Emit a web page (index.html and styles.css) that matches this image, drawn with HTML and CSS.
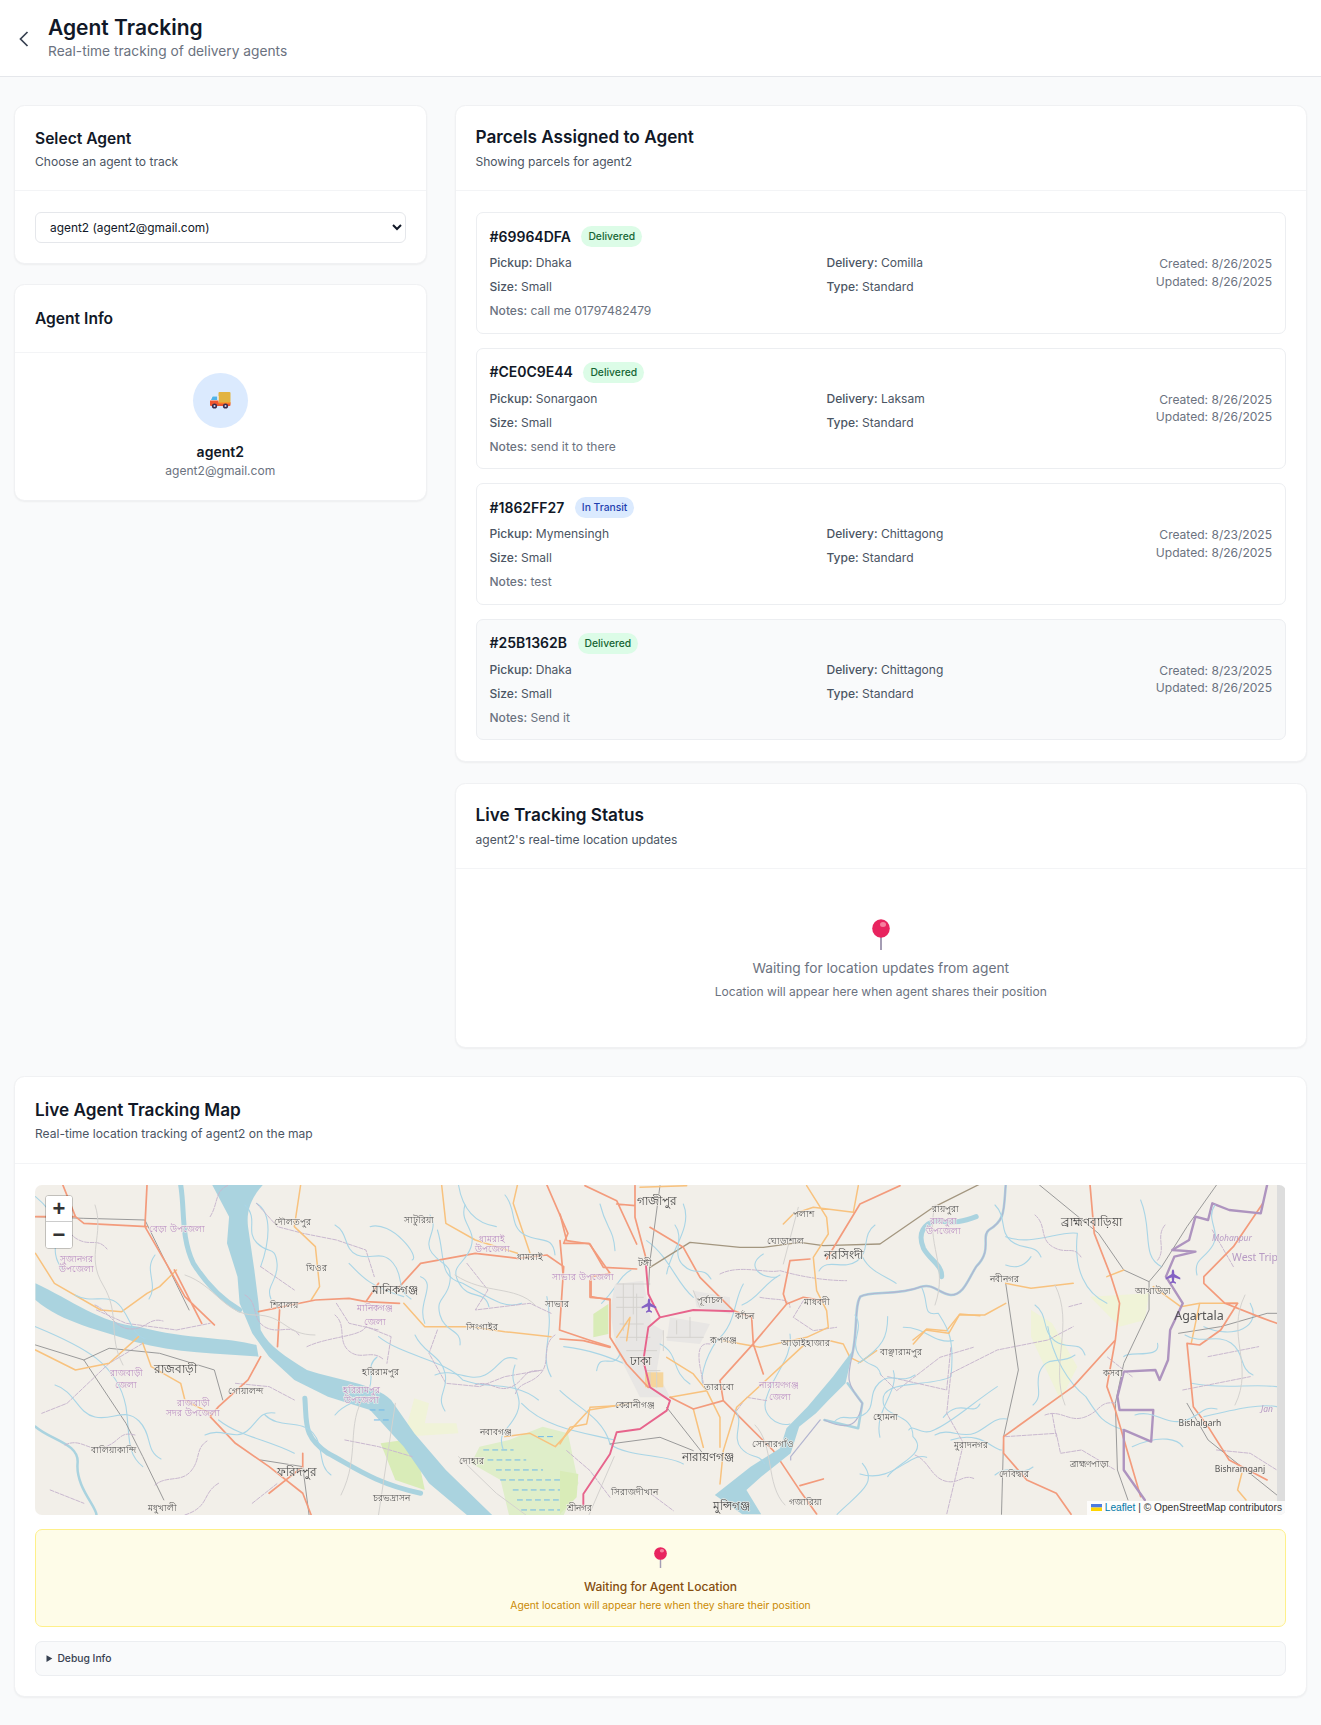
FILE: index.html
```html
<!DOCTYPE html>
<html>
  <head>
    <meta charset="UTF-8">
    <title>Agent Tracking</title>
    <link rel="stylesheet" href="styles.css">
  </head>
  <body>

    <header class="page-header">
      <svg class="back" width="10" height="16" viewBox="0 0 10 16"><path d="M8.5 1 1.5 8l7 7"/></svg>
      <div>
        <h1>Agent Tracking</h1>
        <p>Real-time tracking of delivery agents</p>
      </div>
    </header>

    <main class="page">
      <div class="top-grid">
        <div class="col side">
          <section class="card">
            <div class="card-head">
              <h2>Select Agent</h2>
              <p>Choose an agent to track</p>
            </div>
            <div class="card-body select-body">
              <select class="agent-select">
                <option>agent2 (agent2@gmail.com)</option>
              </select>
            </div>
          </section>

          <section class="card">
            <div class="card-head info-head">
              <h2>Agent Info</h2>
            </div>
            <div class="card-body agent-info">
              <div class="avatar">
                <svg width="21" height="17" viewBox="0 0 21 17">
                  <rect x="8.5" y="0" width="12" height="10.5" rx="1" fill="#e2b341"/>
                  <path d="M2 4h6.5v7H0V7.5z" fill="#f0f0f4"/>
                  <path d="M2.6 4.6h4.6v3.4H1z" fill="#4fb3ea"/>
                  <path d="M0 8.5h8.5v2H20.500v2.500a1 1 0 0 1-1 1H1a1 1 0 0 1-1-1z" fill="#f0562e"/>
                  <rect x="8.500" y="10" width="12" height="1.500" fill="#f79a2b"/>
                  <circle cx="4.500" cy="14" r="2.600" fill="#3a2e4f"/>
                  <circle cx="4.500" cy="14" r="1" fill="#d9d4e4"/>
                  <circle cx="15.500" cy="14" r="2.600" fill="#3a2e4f"/>
                  <circle cx="15.500" cy="14" r="1" fill="#d9d4e4"/>
                </svg>
              </div>
              <div class="agent-name">agent2</div>
              <div class="agent-email">agent2@gmail.com</div>
            </div>
          </section>
        </div>

        <div class="col main-col">
          <section class="card">
            <div class="card-head">
              <h2>Parcels Assigned to Agent</h2>
              <p>Showing parcels for agent2</p>
            </div>
            <div class="card-body parcels">

              <div class="parcel">
                <div class="parcel-main">
                  <div class="parcel-title"><span class="parcel-id">#69964DFA</span><span class="badge delivered">Delivered</span></div>
                  <div class="parcel-grid">
                    <div><b>Pickup:</b> Dhaka</div>
                    <div><b>Delivery:</b> Comilla</div>
                    <div><b>Size:</b> Small</div>
                    <div><b>Type:</b> Standard</div>
                  </div>
                  <div class="parcel-notes"><b>Notes:</b> call me 01797482479</div>
                </div>
                <div class="parcel-dates">Created: 8/26/2025<br>Updated: 8/26/2025</div>
              </div>

              <div class="parcel">
                <div class="parcel-main">
                  <div class="parcel-title"><span class="parcel-id">#CE0C9E44</span><span class="badge delivered">Delivered</span></div>
                  <div class="parcel-grid">
                    <div><b>Pickup:</b> Sonargaon</div>
                    <div><b>Delivery:</b> Laksam</div>
                    <div><b>Size:</b> Small</div>
                    <div><b>Type:</b> Standard</div>
                  </div>
                  <div class="parcel-notes"><b>Notes:</b> send it to there</div>
                </div>
                <div class="parcel-dates">Created: 8/26/2025<br>Updated: 8/26/2025</div>
              </div>

              <div class="parcel">
                <div class="parcel-main">
                  <div class="parcel-title"><span class="parcel-id">#1862FF27</span><span class="badge transit">In Transit</span></div>
                  <div class="parcel-grid">
                    <div><b>Pickup:</b> Mymensingh</div>
                    <div><b>Delivery:</b> Chittagong</div>
                    <div><b>Size:</b> Small</div>
                    <div><b>Type:</b> Standard</div>
                  </div>
                  <div class="parcel-notes"><b>Notes:</b> test</div>
                </div>
                <div class="parcel-dates">Created: 8/23/2025<br>Updated: 8/26/2025</div>
              </div>

              <div class="parcel selected">
                <div class="parcel-main">
                  <div class="parcel-title"><span class="parcel-id">#25B1362B</span><span class="badge delivered">Delivered</span></div>
                  <div class="parcel-grid">
                    <div><b>Pickup:</b> Dhaka</div>
                    <div><b>Delivery:</b> Chittagong</div>
                    <div><b>Size:</b> Small</div>
                    <div><b>Type:</b> Standard</div>
                  </div>
                  <div class="parcel-notes"><b>Notes:</b> Send it</div>
                </div>
                <div class="parcel-dates">Created: 8/23/2025<br>Updated: 8/26/2025</div>
              </div>

            </div>
          </section>

          <section class="card">
            <div class="card-head">
              <h2>Live Tracking Status</h2>
              <p>agent2's real-time location updates</p>
            </div>
            <div class="card-body waiting">
              <svg width="18" height="31" viewBox="0 0 18 31">
                <rect x="8" y="15" width="2" height="16" fill="#a49db4"/>
                <ellipse cx="9" cy="9.500" rx="8.800" ry="9.300" fill="#e8245f"/>
                <ellipse cx="11" cy="5.500" rx="3" ry="2.500" fill="#f6809f"/>
              </svg>
              <div class="waiting-title">Waiting for location updates from agent</div>
              <div class="waiting-sub">Location will appear here when agent shares their position</div>
            </div>
          </section>
        </div>
      </div>

      <section class="card map-card">
        <div class="card-head">
          <h2>Live Agent Tracking Map</h2>
          <p>Real-time location tracking of agent2 on the map</p>
        </div>
        <div class="card-body">
          <div class="map">
            <svg class="map-art" width="1250" height="330" viewBox="0 0 1250 330">
              <rect width="1250" height="330" fill="#f2efe9"/>

              <!-- west part, coords are from a 2.376 x 3 crop -->
              <g transform="translate(-35.300 -115) scale(.4209 .3333)">
                <path class="green pale" d="M985 985 1020 1000 1010 1060 1085 1060 1090 1090 960 1100Z"/>
                <path class="green" d="M905 1120 960 1110 1000 1200 1010 1260 940 1230Z"/>
                <path class="green wetland" d="M1140 1130 1210 1110 1290 1070 1350 1090 1375 1240 1340 1335H1210L1190 1230 1120 1180Z"/>
                <path class="water" d="M505 345H625C600 380 585 420 590 470L605 600 615 700 620 780C640 830 680 860 730 900 800 930 890 940 930 990L985 1090 1060 1200 1170 1335H1110L1020 1240 960 1130 880 1020 780 980 700 930 640 860 600 790 570 700 565 620 540 520 545 440Z"/>
                <path class="water" d="M85 640 85 690C150 760 240 780 320 815 420 850 520 850 615 860L610 825C540 800 450 810 330 770 240 760 170 690 85 640Z"/>
                <path class="water-line wide" d="M430 345C440 420 430 500 460 580 490 640 530 690 570 720"/>
                <path class="water-line wide" d="M725 985C730 1060 720 1100 780 1150 840 1190 890 1240 1000 1270"/>
                <path class="water-line med" d="M85 1070C120 1110 190 1120 185 1180 180 1250 230 1310 230 1335"/>
                <path class="water-line" d="M85 380C180 480 100 520 150 600M610 400C650 430 640 520 620 590M830 580C860 620 880 650 960 680M1010 760C990 700 1040 640 1000 620M880 470C930 450 1000 560 980 570M1040 480C1060 560 1040 620 1100 640 1160 680 1200 720 1240 700M1300 680C1320 800 1280 850 1310 920M1340 830C1420 840 1480 880 1540 910M85 770C200 830 280 880 300 1010 310 1100 300 1150 340 1190M520 1050C570 1100 640 1110 700 1150M900 800C960 860 1060 870 1100 930 1160 960 1220 930 1280 990M1240 1000C1300 1080 1400 1090 1460 1110M1430 700C1470 650 1470 620 1500 600M1090 345C1100 420 1130 460 1180 470"/>
                <path class="boundary" d="M500 440C520 400 510 360 545 345M610 400 660 470 720 490 800 510 870 540 890 620M620 590 700 660M800 700 830 760 900 780M730 830C780 800 860 800 870 770L930 800 920 880M1040 780 1020 850 1060 940 1140 950 1200 920 1290 900M1110 580 1160 660 1130 720 1260 700 1310 730M230 720 300 760 420 780 500 760M340 820 260 880 160 1000 100 1030M560 940 640 950 700 990M820 1110 900 1130 980 1160M120 1260 200 1300M440 1335C500 1310 480 1270 520 1240M600 1300 660 1240"/>
                <path class="rail" d="M85 440 200 445 345 450 380 540 450 720M85 825 200 870 300 1060 340 1160 390 1290M200 870 260 835 380 850 510 900 530 990M620 1170 720 1190 735 1335"/>
                <path class="minor" d="M900 1335 940 1000M1090 1160 1180 1270 1250 1335M1400 1335 1460 1160"/>
                <path class="secondary" d="M715 345 700 470 750 530 760 650 740 690M85 550 130 640 240 720 290 725 350 670 380 650 420 600M960 700 1010 770 1120 770 1200 785 1310 800M1050 345 1060 460 1130 510 1230 550M1230 345 1220 400 1260 550M85 840 180 900 260 880 330 800M340 820 360 890 430 940 440 990 500 1030M1200 1100 1260 1090 1320 1130 1400 1020 1500 1000"/>
                <path class="primary" d="M350 345 345 470 400 590 440 680 510 765M415 600 480 760M85 440 180 440 200 460 350 470M150 345 180 440M615 725 750 690 830 685 870 695 950 700M870 695 900 640M950 650 1000 580 1130 550 1230 565 1300 555 1340 590 1330 780 1400 810 1450 830M665 720 660 830M620 860 590 930 520 1010 500 1040 560 1120 640 1190 720 1270 740 1335M720 1150 720 1190 640 1270M1300 345 1350 490 1340 520 1400 520 1450 610 1405 620 1405 680 1450 690"/>
                <g class="wet"><path d="M880 1020H920M890 1050H930M1150 1140H1220M1160 1170H1250M1180 1200H1290M1190 1230H1350M1220 1260H1370M1230 1290H1360M1240 1320H1340M1280 1100H1320"/></g>
              </g>

              <!-- middle part, 3x crop, Dhaka -->
              <g transform="translate(525 -1) scale(.3333)">
                <path class="city" d="M165 300 250 290 275 420 310 440 290 560 330 640 240 640 170 500 150 380ZM330 400 450 420 420 480 320 470ZM400 320 510 340 510 390 410 370Z"/>
                <path class="urban" d="M255 565h55v45h-55z"/>
                <path class="green" d="M100 390 145 360 145 450 100 460ZM0 860 55 870 50 940 0 990Z"/>
                <path class="water-line" d="M120 60C140 140 160 130 165 200M370 60C400 130 330 200 320 270M260 170C330 220 350 300 400 340M550 300C520 350 530 420 470 470 430 530 420 590 430 600M0 620C50 670 130 700 150 780 200 820 320 810 370 840M300 480C360 510 330 560 390 600M610 210C560 240 590 280 650 280M1030 430C1100 430 1120 480 1180 470M690 450C700 520 640 570 620 640 600 690 650 730 690 720M1000 560C1020 620 940 680 960 760M1150 700C1200 640 1240 700 1260 660M900 870C1000 900 1050 800 1100 820M180 510C160 560 120 500 110 560"/>
                <path class="boundary" d="M480 270C540 240 620 270 660 260 730 280 800 290 860 290M730 350 700 400 760 440 830 430M450 480C390 470 430 580 430 600M600 340C650 350 690 340 690 370M530 680 560 640 620 650M20 800 90 860 150 940M960 570 1010 620 1140 520 1240 490M260 920 340 980"/>
                <path class="minor" d="M170 300H270M190 300V440M220 300V390M170 340H250M170 370H250M310 440V500M350 410V450M390 400V460M320 460H430M400 320 420 370M715 70 670 240M180 420H250M180 460H270M200 500H290M230 330V470M260 560H300M270 565V610M290 565V610"/>
                <path class="rail" d="M300 5 270 230 265 320M320 670 430 810M150 780 300 760 400 800"/>
                <path class="rail brown" d="M270 250 390 175 540 190 610 190 720 175 790 185 960 180 1120 70 1260 0"/>
                <path class="secondary" d="M740 5 800 100 805 150 760 220 770 320 800 380 805 430 740 460 600 490 490 470M670 120 700 90 760 70 880 85 895 5M810 470 850 480 870 520 900 535 950 500M1060 480 1100 435 1160 440 1200 390 1260 395M730 485 530 670 490 800 480 900M400 675 430 790M330 640 440 620 480 700 480 790M170 460 210 400 200 470M90 670 170 665M90 670 80 720 30 730 0 780M320 520 400 570 440 620M240 10 380 5"/>
                <path class="primary" d="M75 5 170 50 230 180M225 5V100L260 230M170 60 225 65M0 90 20 170 90 180 130 250 230 255M0 170 10 280M90 290V340L150 345V460L200 540 265 610M0 465 70 470 150 490M270 130 370 190 420 280 520 380 575 400 580 480 610 570M575 485 680 360 730 340 790 350M575 485 480 590 490 650 570 730 640 800 720 920 770 990M330 640 400 675 490 650M690 230 670 330 680 360M690 230 750 225M800 225 900 60 1020 5M720 905 790 885"/>
                <path class="trunk" d="M258 245 265 330 300 400 265 430 250 530 270 610 330 650 320 680 240 735 170 745 150 810 70 930V970M300 400 400 378 520 382"/>
              </g>

              <!-- east part, coords are from a 2.372 x 3 crop -->
              <g transform="translate(625 -15) scale(.4216 .3333)">
                <path class="green pale" d="M880 420 930 460 990 590 950 690 920 610 880 500ZM1020 380 1160 370 1150 450 1090 470Z"/>
                <path class="water-line wide" d="M660 150C625 160 610 190 625 235 640 270 670 285 668 320"/>
                <path class="water-line med" d="M820 45C815 120 820 150 780 180 760 200 790 240 750 290 730 330 720 375 690 375 660 370 650 340 620 350 560 380 500 360 475 380 460 410 470 480 455 560"/>
                <path class="water-line wide" d="M660 152C700 160 720 155 750 140"/>
                <path class="water" d="M458 540 440 640 400 690 370 730 330 770 310 850 240 920 205 960 240 1033H195L130 975 215 890 285 835 300 775 350 710 410 620Z"/>
                <path class="water-line med" d="M445 640 480 700 470 775 390 750"/>
                <path class="water-line" d="M560 340C540 320 500 310 480 260M620 350C640 400 620 440 660 430 680 470 700 500 690 620 650 650 540 630 530 680 520 750 600 720 600 800 640 850 560 880 540 920M540 440C540 500 530 530 470 580M820 200C880 230 950 180 990 190 980 300 1010 370 1060 400M1140 90C1170 180 1140 260 1190 290M820 285C850 300 870 280 880 260M920 470C930 560 970 640 1010 680 1040 740 1050 760 1100 780M800 650C740 700 690 760 650 780 620 800 600 760 590 780M690 810C760 780 790 840 810 840M1180 520C1190 570 1110 540 1100 560M1290 740C1360 720 1420 700 1463 710M1260 640C1340 660 1400 640 1463 650M1120 830C1190 790 1230 810 1240 830M1400 400C1430 470 1360 510 1290 470M480 880C520 940 470 970 420 1033"/>
                <path class="boundary" d="M690 610 800 540 920 510 980 470M540 620 680 660 690 530M970 410 1000 400M690 610 680 730 720 820 680 1033M820 800 940 790 950 850 1000 840 1080 900M1120 620 1060 560M930 730 940 800M1240 660 1400 620M1300 560 1420 530M1320 840 1400 850 1463 900M1310 180 1360 290"/>
                <path class="rail" d="M900 45 1040 190 1100 300 1160 335 1160 420 1100 580 1080 700 1085 900 1110 990M1320 45 1250 170 1190 290 1160 335M1250 700 1300 810 1463 975M820 340 850 600 815 800 810 1033M1230 490 1330 470 1440 430 1463 430"/>
                <path class="secondary" d="M820 340 880 355 980 340M820 400 770 435 710 435 685 490 630 480 600 510M1100 300 1060 320M1170 350 1235 410 1280 400 1370 400M1280 400 1260 520M1380 910 1370 960 1390 990"/>
                <path class="primary" d="M1020 45 1030 190 1070 320 1090 400 1080 510 1060 650 1080 720 1140 980M1080 510 980 650 815 800 815 850 870 930 940 970 975 1033M1430 100 1360 230 1290 320 1290 340 1340 400 1420 440 1463 460M1340 400 1370 400 1330 480 1280 525 1250 520 1265 710 1300 770 1350 870 1440 930"/>
                <path class="border-line" d="M1440 45 1425 130 1350 120 1310 100 1300 150 1270 140 1255 210 1215 240 1270 245 1220 260 1200 320 1240 400 1210 480 1205 570 1185 630 1175 600 1100 605 1085 680 1090 720 1170 720 1165 815 1100 780 1100 900 1150 990"/>
                <path class="river-border" d="M820 45C815 120 820 150 780 180 760 200 790 240 750 290 730 330 720 375 690 375 660 370 650 340 620 350 560 380 500 360 475 380 460 410 470 480 455 560 445 620 440 640 480 700 470 775 440 780 390 750M380 750 310 860 310 870"/>
              </g>

              <!-- small streams, tracks and district lines, plain map coords -->
              <path class="water-line" d="M395 30c10 15-8 25 2 38s20 10 18 28-15 16-10 34 22 14 20 30M430 20c-6 18 12 24 6 42s-22 18-12 36 26 6 30 24M470 10c12 14 4 32 20 40s28 0 30 20M300 40c14 8 8 24 22 30s24-6 36 8 2 26 18 36M210 20c14 14 0 26 12 38s18 2 20 20-12 22-6 36M40 110c18 10 34-4 46 12s10 26 24 32M120 70c-12 16 4 28-6 44M20 200c20 6 22 28 40 32s30-10 44 4 6 30 22 38M170 250c16-8 30 6 42-4s12-20 28-18M230 230c14 14 36 4 48 18s4 32 18 42M300 230c10-14 28-12 34-26s-4-22 8-32M400 190c18-8 34 8 50 0s16-22 32-16M380 150c8 18 26 20 30 38s-10 22 0 38M480 180c-8 20 10 30 2 48s-20 18-14 36M880 190c-14 10-24-4-36 8s-2 24-16 32-20-4-30 8M840 40c-14 10-4 26-18 36s-30-4-38 10M1000 120c14 10 6 26 20 36s24-2 30 14M1040 170c-14 10-26 0-34 14s4 26-8 36M1150 150c16 10 32-2 46 8s8 26 22 32M1100 230c18-6 30 10 48 6s18-16 34-12M1180 20c-10 14 6 26-2 40s-20 14-16 30M960 20c12 12 4 26 16 36s24 2 30 16M900 250c14-8 26 4 40-2s18-16 32-14M960 290c14-12 26 2 38-8M640 40c10 14-4 28 8 40s20 0 28 14M745 90c-16 8-22 24-38 30M820 130c10 14-6 26 4 40s18 6 22 20M700 225c10 12-4 26 6 38s16 4 24 16"/>
              <path class="boundary" d="M20 20c14 10 8 26 22 34s20-2 30 10M60 120c14 6 20 24 36 24s18-12 32-8M30 260c16-8 24 8 40 2s14-16 30-12M120 300c12-10 26-2 36-14s4-22 16-30M210 110c14 8 6 24 20 32s26-4 34 8M300 130c12 10 2 26 14 36s22-2 34 8M440 200c14-6 22 8 36 2s12-18 28-16M520 150c-14 10-4 26-14 38s-22 8-26 22M1000 30c12 10 4 24 18 32s20-2 28 10M1130 40c-10 12 2 24-8 36M1010 230c16-6 24 8 40 2s14-16 30-14M880 270c14 6 16 22 30 26s18-8 30-2"/>
              <path class="minor" d="M60 20c10 30-10 50 8 80s4 50 20 80M150 90c30 10 40 40 70 40s30 20 60 20M330 210c-20 30-4 60-24 100M420 90c30 20 60 10 80 30M1020 100c20 40-6 80 10 120M1210 110c-20 40 10 70-10 110M900 20c-10 40 14 60 0 100M720 240c20 20 10 60 30 80"/>

              <path class="plane" d="M614 113.500c1 0 1.300 2 1.300 4.500l6 3.800v1.700l-6-2-.3 3.400 2 1.500v1.300l-3-.9-3 .9v-1.300l2-1.500-.3-3.400-6 2v-1.700l6-3.800c0-2.500.3-4.500 1.300-4.500z"/>
              <path class="plane" d="M1138 84.500c1 0 1.300 2 1.300 4.500l6 3.800v1.700l-6-2-.3 3.400 2 1.500v1.300l-3-.9-3 .9v-1.300l2-1.500-.3-3.400-6 2v-1.700l6-3.800c0-2.500.3-4.500 1.300-4.500z"/>

              <g class="lbl big">
                <text x="622" y="20">গাজীপুর</text>
                <text x="605" y="180">ঢাকা</text>
                <text x="808" y="74">নরসিংদী</text>
                <text x="673" y="276">নারায়ণগঞ্জ</text>
                <text x="696" y="325">মুন্সিগঞ্জ</text>
                <text x="360" y="109">মানিকগঞ্জ</text>
                <text x="140" y="188">রাজবাড়ী</text>
                <text x="262" y="291">ফরিদপুর</text>
                <text x="1056" y="41">ব্রাহ্মণবাড়িয়া</text>
              </g>
              <g class="lbl">
                <text x="384" y="38">সাটুরিয়া</text>
                <text x="257" y="40">দৌলতপুর</text>
                <text x="281" y="86">ঘিওর</text>
                <text x="249" y="123">শিবালয়</text>
                <text x="447" y="145">সিংগাইর</text>
                <text x="345" y="190">হরিরামপুর</text>
                <text x="210" y="209">গোয়ালন্দ</text>
                <text x="78" y="268">বালিয়াকান্দি</text>
                <text x="127" y="326">মধুখালী</text>
                <text x="495" y="75">ধামরাই</text>
                <text x="522" y="122">সাভার</text>
                <text x="356" y="316">চরভদ্রাসন</text>
                <text x="436" y="279">দোহার</text>
                <text x="461" y="250">নবাবগঞ্জ</text>
                <text x="600" y="223">কেরানীগঞ্জ</text>
                <text x="768" y="32">পলাশ</text>
                <text x="750" y="59">ঘোড়াশাল</text>
                <text x="910" y="27">রায়পুরা</text>
                <text x="782" y="120">মাধবদী</text>
                <text x="709" y="134">কাঁচন</text>
                <text x="675" y="118">পূর্বাচল</text>
                <text x="688" y="158">রূপগঞ্জ</text>
                <text x="770" y="161">আড়াইহাজার</text>
                <text x="866" y="170">বাঞ্ছারামপুর</text>
                <text x="684" y="205">তারাবো</text>
                <text x="738" y="262">সোনারগাঁও</text>
                <text x="770" y="320">গজারিয়া</text>
                <text x="850" y="235">হোমনা</text>
                <text x="936" y="263">মুরাদনগর</text>
                <text x="599" y="310">সিরাজদীখান</text>
                <text x="544" y="326">শ্রীনগর</text>
                <text x="610" y="81">টঙ্গী</text>
                <text x="969" y="97">নবীনগর</text>
                <text x="1118" y="109">আখাউড়া</text>
                <text x="1078" y="191">কসবা</text>
                <text x="1054" y="282">ব্রাহ্মণপাড়া</text>
                <text x="979" y="292">দেবিদ্বার</text>
                <text x="1165" y="241">Bishalgarh</text>
                <text x="1205" y="287">Bishramganj</text>
              </g>
              <g class="lbl admin">
                <text x="340" y="126">মানিকগঞ্জ</text>
                <text x="340" y="140">জেলা</text>
                <text x="91" y="191">রাজবাড়ী</text>
                <text x="91" y="203">জেলা</text>
                <text x="326" y="208">হরিরামপুর</text>
                <text x="326" y="218">উপজেলা</text>
                <text x="158" y="221">রাজবাড়ী</text>
                <text x="158" y="231">সদর উপজেলা</text>
                <text x="457" y="57">ধামরাই</text>
                <text x="457" y="67">উপজেলা</text>
                <text x="548" y="95">সাভার উপজেলা</text>
                <text x="142" y="47">বেড়া উপজেলা</text>
                <text x="41" y="77">সুজানগর</text>
                <text x="41" y="87">উপজেলা</text>
                <text x="744" y="203">নারায়ণগঞ্জ</text>
                <text x="745" y="215">জেলা</text>
                <text x="908" y="39">রায়পুরা</text>
                <text x="908" y="49">উপজেলা</text>
              </g>
              <text class="lbl-city" x="1164" y="135">Agartala</text>
              <text class="lbl-state" x="1220" y="76">West Trip</text>
              <text class="lbl-town" x="1197" y="56">Mohanpur</text>
              <text class="lbl-town" x="1232" y="227">Jan</text>
              <rect x="1242" width="8" height="330" fill="#ddd"/>
            </svg>

            <div class="zoom-ctrl">
              <a class="zoom-in">+</a>
              <a class="zoom-out">−</a>
            </div>
            <div class="attribution">
              <svg width="11" height="7" viewBox="0 0 11 7"><rect width="11" height="3.500" fill="#4C7BE1"/><rect y="3.500" width="11" height="3.500" fill="#FFD500"/></svg>
              <a>Leaflet</a> | © OpenStreetMap contributors
            </div>
          </div>

          <div class="alert">
            <svg width="13" height="21" viewBox="0 0 18 31" preserveAspectRatio="none">
              <rect x="8" y="15" width="2" height="16" fill="#a49db4"/>
              <ellipse cx="9" cy="9.500" rx="8.800" ry="9.300" fill="#e8245f"/>
              <ellipse cx="11" cy="5.500" rx="3" ry="2.500" fill="#f6809f"/>
            </svg>
            <div class="alert-title">Waiting for Agent Location</div>
            <div class="alert-sub">Agent location will appear here when they share their position</div>
          </div>

          <details class="debug">
            <summary>Debug Info</summary>
          </details>
        </div>
      </section>
    </main>

  </body>
</html>
```

FILE: styles.css
```css
*
{
  box-sizing:border-box
}
html, body
{
  margin:0;
  background-color:#f9fafb
}
body
{
  font-family:Inter,"Liberation Sans",sans-serif;
  font-size:12.05px;
  line-height:17.5px;
  color:#111827;
  min-height:1725px
}
h1, h2, p
{
  margin:0
}

/* header */
.page-header
{
  display:flex;
  align-items:center;
  gap:19px;
  height:77px;
  padding:0 19px;
  background-color:white;
  border-bottom:1px solid #e5e7eb
}
.back
{
  fill:none;
  stroke:#374151;
  stroke-width:1.7;
  margin-top:1px
}
.page-header h1
{
  font-size:21px;
  line-height:26px;
  font-weight:600
}
.page-header p
{
  font-size:13.75px;
  line-height:21px;
  color:#6b7280
}

/* layout */
.page
{
  padding:28px 14px
}
.top-grid
{
  display:grid;
  grid-template-columns:412.5px 1fr;
  gap:28px
}
.col
{
  display:flex;
  flex-direction:column;
  gap:20.5px
}
.main-col
{
  gap:21px
}
.card
{
  background-color:white;
  border:1px solid #f0f1f3;
  border-radius:10.5px;
  box-shadow:0 1px 2px rgba(0,0,0,.05)
}
.card-head
{
  padding:19px 20px 20px;
  border-bottom:1px solid #f3f4f6
}
.card-head h2
{
  font-size:17.2px;
  line-height:24.5px;
  font-weight:600
}
.card-head p
{
  margin-top:3px;
  color:#4b5563
}
.side .card-head
{
  padding:21px 20px 20px
}
.side .card-head h2
{
  font-size:15.6px
}
.side .card-head p
{
  margin-top:1px
}
.side .info-head
{
  padding:22px 20px 20px
}
.card-body
{
  padding:21px 20px
}
.select-body
{
  padding-bottom:19.5px
}
.agent-select
{
  display:block;
  width:100%;
  height:31px;
  padding:0 10px;
  font-family:inherit;
  font-size:11.9px;
  color:#111827;
  background-color:white;
  border:1px solid #e5e7eb;
  border-radius:6px
}

/* agent info */
.agent-info
{
  display:flex;
  flex-direction:column;
  align-items:center;
  padding-top:20px;
  padding-bottom:20px
}
.avatar
{
  display:flex;
  align-items:center;
  justify-content:center;
  width:55px;
  height:55px;
  border-radius:50%;
  background-color:#dbeafe
}
.agent-name
{
  margin-top:13.5px;
  font-size:14px;
  line-height:21px;
  font-weight:600
}
.agent-email
{
  color:#6b7280
}

/* parcels */
.parcels
{
  display:flex;
  flex-direction:column;
  gap:14px
}
.parcel
{
  display:flex;
  align-items:center;
  justify-content:space-between;
  padding:13px;
  border:1px solid #eceef1;
  border-radius:7px;
  color:#4b5563
}
.parcel.selected
{
  background-color:#f9fafb
}
.parcel b
{
  font-weight:500
}
.parcel-title
{
  display:flex;
  align-items:center;
  gap:10.5px;
  margin-bottom:7px
}
.parcel-id
{
  font-size:14px;
  font-weight:600;
  color:#111827
}
.badge
{
  height:21px;
  padding:0 7px;
  font-size:10.3px;
  line-height:21px;
  font-weight:500;
  border-radius:11px
}
.delivered
{
  background-color:#dcfce7;
  color:#166534
}
.transit
{
  background-color:#dbeafe;
  color:#1e40af
}
.parcel-grid
{
  display:grid;
  grid-template-columns:323px 323px;
  column-gap:14px;
  row-gap:6.5px
}
.parcel-notes
{
  margin-top:6.5px;
  color:#6b7280
}
.parcel-dates
{
  text-align:right;
  color:#6b7280
}

/* waiting blocks */
.waiting
{
  display:flex;
  flex-direction:column;
  align-items:center;
  padding:50px 20px 47px;
  color:#6b7280
}
.waiting-title
{
  margin-top:8px;
  font-size:13.75px;
  line-height:21px
}
.waiting-sub
{
  margin-top:3.5px
}

/* map */
.map-card
{
  margin-top:28px
}
.map-card .card-head
{
  padding:20.5px 20px 20px
}
.map-card .card-body
{
  padding:21px 20px 20px
}
.map
{
  position:relative;
  height:330px;
  overflow:hidden;
  border-radius:7px
}
.map-art
{
  display:block;
  filter:blur(.5px)
}
.map-art path
{
  fill:none;
  stroke-linejoin:round;
  stroke-linecap:round
}
.map-art .water
{
  fill:#aad3df;
  stroke:none
}
.map-art .green
{
  fill:#d9ecb8;
  stroke:none
}
.map-art .green.pale
{
  fill:#f0f3d8
}
.map-art .green.wetland
{
  fill:#dfeec9
}
.map-art .city
{
  fill:#e8e6e4;
  stroke:none
}
.map-art .urban
{
  fill:#f5d59c;
  stroke:none
}
.map-art .plane
{
  fill:#8461c4
}
.water-line
{
  stroke:#a9d5e6;
  stroke-width:1.100;
  vector-effect:non-scaling-stroke
}
.water-line.med
{
  stroke:#aad3df;
  stroke-width:2.500
}
.water-line.wide
{
  stroke:#aad3df;
  stroke-width:5
}
.boundary
{
  stroke:#c9b8cf;
  stroke-width:1;
  stroke-dasharray:4 1.500;
  vector-effect:non-scaling-stroke
}
.border-line
{
  stroke:#ae94bf;
  stroke-width:2.400;
  vector-effect:non-scaling-stroke
}
.river-border
{
  stroke:#b3b5d0;
  stroke-width:1.200;
  vector-effect:non-scaling-stroke
}
.rail
{
  stroke:#9a9a9a;
  stroke-width:1;
  vector-effect:non-scaling-stroke
}
.rail.brown
{
  stroke:#a3967f;
  stroke-width:1.300
}
.minor
{
  stroke:#d4d2cf;
  stroke-width:1;
  vector-effect:non-scaling-stroke
}
.secondary
{
  stroke:#f8c27e;
  stroke-width:1.500;
  vector-effect:non-scaling-stroke
}
.primary
{
  stroke:#f39b7c;
  stroke-width:1.700;
  vector-effect:non-scaling-stroke
}
.trunk
{
  stroke:#e7648c;
  stroke-width:1.900;
  vector-effect:non-scaling-stroke
}
.wet path
{
  stroke:#6fb8ea;
  stroke-width:1;
  stroke-dasharray:5 4;
  vector-effect:non-scaling-stroke
}
.lbl text
{
  font-family:"Noto Sans",sans-serif;
  font-size:8.500px;
  text-anchor:middle;
  fill:#555;
  paint-order:stroke;
  stroke:rgba(242,239,233,.8);
  stroke-width:1.500px
}
.lbl.big text
{
  font-size:12px;
  fill:#444
}
.lbl.admin text
{
  fill:#b98ec2;
  font-size:9px
}
.lbl-city
{
  font-family:"Noto Sans",sans-serif;
  font-size:12.500px;
  text-anchor:middle;
  fill:#555
}
.lbl-state
{
  font-family:"Noto Sans",sans-serif;
  font-size:10.500px;
  text-anchor:middle;
  fill:#b79ac4
}
.lbl-town
{
  font-family:"Noto Sans",sans-serif;
  font-style:italic;
  font-size:8.500px;
  text-anchor:middle;
  fill:#b79ac4
}
.zoom-ctrl
{
  position:absolute;
  top:10px;
  left:10px;
  width:28px;
  border:1.750px solid rgba(0,0,0,.2);
  border-radius:3.500px;
  background-clip:padding-box
}
.zoom-ctrl a
{
  display:block;
  height:26px;
  background-color:white;
  font-family:"Liberation Sans",sans-serif;
  font-size:22px;
  font-weight:700;
  line-height:25px;
  text-align:center;
  color:#333
}
.zoom-in
{
  border-bottom:1px solid #ccc;
  border-radius:2px 2px 0 0
}
.zoom-out
{
  border-radius:0 0 2px 2px
}
.attribution
{
  position:absolute;
  right:0;
  bottom:0;
  height:14px;
  padding:0 4px;
  font-family:"Liberation Sans",sans-serif;
  font-size:10.200px;
  line-height:14px;
  color:#333;
  background-color:rgba(255,255,255,.8)
}
.attribution a
{
  color:#0078a8
}

/* alert + debug */
.alert
{
  display:flex;
  flex-direction:column;
  align-items:center;
  height:98px;
  margin-top:14px;
  padding-top:17px;
  background-color:#fefce8;
  border:1px solid #fef08a;
  border-radius:7px
}
.alert-title
{
  margin-top:10px;
  font-weight:500;
  color:#854d0e
}
.alert-sub
{
  margin-top:2.500px;
  font-size:10.300px;
  line-height:14px;
  color:#ca8a04
}
.debug
{
  height:35px;
  margin-top:14px;
  padding:0 10.500px;
  background-color:#f9fafb;
  border:1px solid #eceef1;
  border-radius:7px
}
.debug summary
{
  font-size:10.300px;
  font-weight:500;
  line-height:33px;
  color:#374151
}
```
